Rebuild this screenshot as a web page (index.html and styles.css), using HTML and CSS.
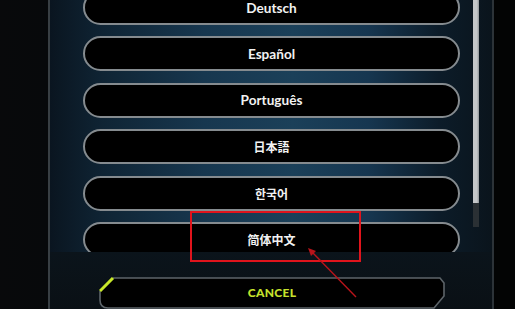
FILE: index.html
```html
<!DOCTYPE html>
<html lang="en">
<head>
  <meta charset="UTF-8" />
  <title>Language</title>
  <link rel="stylesheet" href="styles.css">
</head>
<body>
  <div class="screen">
    <div class="panel">
      <div class="content">
        <div class="list">
          <button class="lang">Deutsch</button>
          <button class="lang">Español</button>
          <button class="lang">Português</button>
          <button class="lang cjk">日本語</button>
          <button class="lang cjk kr">한국어</button>
          <button class="lang cjk sc">简体中文</button>
        </div>
        <div class="scrollbar"><div class="thumb"></div></div>
      </div>
      <div class="footer">
        <button class="cancel">
          <svg class="cancel-frame" width="346" height="34" viewBox="0 0 346 34">
            <path d="M14,1 L341,1 L345,6 L345,19 L335,31 L9,31 Q1,31 1,23 L1,14" fill="#000" stroke="#5d6469" stroke-width="1.6"/>
            <path d="M1,14 L14,1" stroke="#c8e82a" stroke-width="3"/>
          </svg>
          <span>CANCEL</span>
        </button>
      </div>
    </div>
  </div>

  <div class="highlight"></div>
  <svg class="arrow" width="515" height="309" viewBox="0 0 515 309">
    <line x1="356" y1="297" x2="312" y2="252" stroke="#b8141a" stroke-width="1.4"/>
    <path d="M308,248 L316,251 L311,256 Z" fill="#b8141a"/>
  </svg>
</body>
</html>
```

FILE: styles.css
```css
body {
  margin: 0;
  width: 515px;
  height: 309px;
  overflow: hidden;
  background: #040506;
  font-family: Lato, "Noto Sans", sans-serif;
  position: relative;
}

.screen {
  display: flex;
  height: 309px;
  background: linear-gradient(to right, #08090b 0, #07090b 48px, #030404 494px);
}

.panel {
  margin-left: 48px;
  width: 442px;
  border-left: 2px solid #383f44;
  border-right: 2px solid #2c3338;
  display: flex;
  flex-direction: column;
}

.content {
  height: 252px;
  overflow: hidden;
  display: flex;
  padding-left: 33px;
  background: linear-gradient(to right, #0a1520 0, #0f2434 12%, #17374f 35%, #1b4059 55%, #163650 72%, #0c1c29 88%, #0a141c 100%);
}

.list {
  width: 377px;
  margin-top: -10px;
  display: flex;
  flex-direction: column;
  gap: 11.4px;
}

.lang {
  flex: none;
  height: 35px;
  border: 2px solid #858b8f;
  border-radius: 18px;
  background: #000;
  color: #f2f2f2;
  font-family: Lato, "Noto Sans", sans-serif;
  font-weight: 700;
  font-size: 13.6px;
  padding: 0;
}

.cjk {
  font-family: "Noto Sans CJK JP", sans-serif;
  font-size: 12px;
}

.kr {
  font-family: "Noto Sans CJK KR", sans-serif;
}

.sc {
  font-family: "Noto Sans CJK SC", sans-serif;
}

.scrollbar {
  margin-left: 13px;
  width: 6px;
  height: 227px;
  background: #2a3034;
}

.thumb {
  height: 203px;
  background: linear-gradient(to right, #c4c7c9 0, #c4c7c9 65%, #8e9396 100%);
}

.footer {
  flex: 1;
  background: linear-gradient(to bottom, #0b141b, #0a1015);
  padding: 25px 0 0 49px;
  overflow: hidden;
}

.cancel {
  position: relative;
  display: flex;
  align-items: center;
  justify-content: center;
  width: 346px;
  height: 34px;
  padding: 0 0 3px;
  border: none;
  background: none;
  color: #c6e22c;
  font-family: Lato, sans-serif;
  font-weight: 900;
  font-size: 12px;
  letter-spacing: 0.3px;
}

.cancel-frame {
  position: absolute;
  left: 0;
  top: 0;
}

.cancel span {
  position: relative;
}

.highlight {
  position: absolute;
  left: 190px;
  top: 211px;
  width: 167px;
  height: 47px;
  border: 2.5px solid #e0141c;
}

.arrow {
  position: absolute;
  left: 0;
  top: 0;
}
```
